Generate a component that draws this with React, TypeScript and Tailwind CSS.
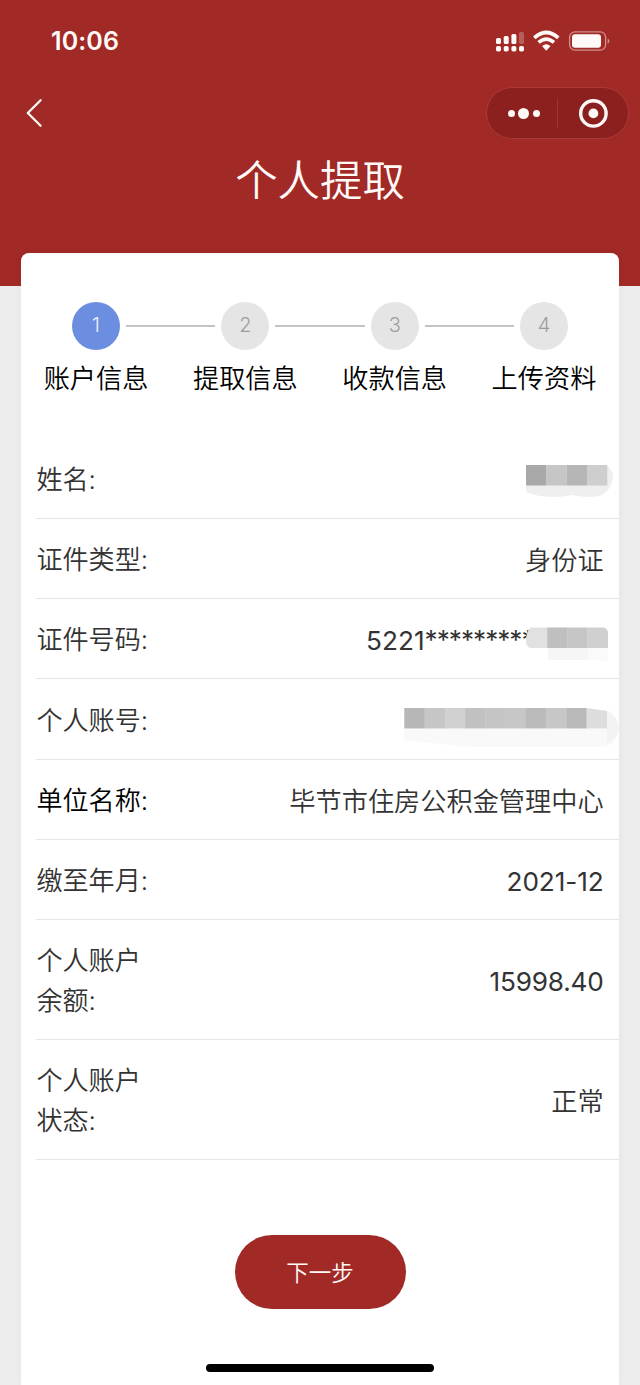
import type { ReactNode } from "react";

const steps = ["账户信息", "提取信息", "收款信息", "上传资料"];

function StatusBar() {
  return (
    <div className="flex h-[82px] items-center justify-between pl-[51px] pr-[30px]">
      <span className="text-[25px] font-semibold leading-none tracking-[0.1px]">10:06</span>
      <svg width="116" height="24" viewBox="0 0 116 24" fill="#fffaf7">
        <rect x="2" y="9" width="5" height="6" rx="1.5" />
        <rect x="9.7" y="7" width="5" height="8" rx="1.5" />
        <rect x="17.4" y="5" width="5" height="10" rx="1.5" />
        <rect x="25" y="3" width="5" height="12" rx="1.5" opacity=".25" />
        <rect x="2" y="17" width="5" height="5.4" rx="1.7" />
        <rect x="9.7" y="17" width="5" height="5.4" rx="1.7" />
        <rect x="17.4" y="17" width="5" height="5.4" rx="1.7" />
        <rect x="25" y="17" width="5" height="5.4" rx="1.7" />
        <g fill="none" stroke="#fffaf7" strokeWidth="3.7">
          <path d="M40.3 8.8Q52.3 -1.8 64.3 8.8" />
          <path d="M44.6 13.4Q52.3 6.8 60 13.4" />
        </g>
        <path d="M48.9 17.1Q52.3 14.4 55.7 17.1L52.3 20.8Z" stroke="#fffaf7" strokeWidth="1.2" strokeLinejoin="round" />
        <rect x="75.6" y="2.8" width="36" height="18.4" rx="5.4" fill="none" stroke="#fffaf7" strokeWidth="1.3" opacity=".5" />
        <rect x="78" y="5.2" width="29" height="13.6" rx="3" />
        <path d="M113.6 9.2Q117.4 12 113.6 14.8Z" opacity=".5" />
      </svg>
    </div>
  );
}

function NavBar() {
  return (
    <div className="flex h-[62px] items-center justify-between pl-[24px] pr-[11px]">
      <svg width="20" height="30" viewBox="0 0 20 30" fill="none" stroke="#fffaf7" strokeWidth="2.3" strokeLinecap="round" strokeLinejoin="round">
        <path d="M16.6 2.2L3.8 15L16.6 27.8" />
      </svg>
      <div className="flex h-[52px] w-[143px] items-center rounded-full border border-[#aa3a37] bg-[#8b201e]">
        <div className="flex w-[70px] items-center justify-center gap-[3.5px] pl-[3px]">
          <span className="size-[7px] rounded-full bg-[#fffaf7]" />
          <span className="size-[11px] rounded-full bg-[#fffaf7]" />
          <span className="size-[7px] rounded-full bg-[#fffaf7]" />
        </div>
        <span className="h-[31px] w-px bg-[#a03330]" />
        <div className="flex flex-1 items-center justify-center">
          <svg width="30" height="30" viewBox="0 0 30 30">
            <circle cx="15.4" cy="15.4" r="12.7" fill="none" stroke="#fffaf7" strokeWidth="3.4" />
            <circle cx="15.4" cy="15.4" r="4.9" fill="#fffaf7" />
          </svg>
        </div>
      </div>
    </div>
  );
}

function Steps() {
  return (
    <div className="pt-[48.5px]">
      <div className="flex items-center px-[50.5px]">
        {steps.map((name, i) => (
          <div key={name} className={i === 0 ? "flex items-center" : "flex flex-1 items-center"}>
            {i > 0 && <span className="ml-[6px] mr-[6px] mt-px h-[1.5px] flex-1 bg-[#c4c4c4]" />}
            <span
              className={
                i === 0
                  ? "flex size-[48px] items-center justify-center rounded-full bg-[#6b8ee0] pb-0.5 text-[20px] text-[#eef3ff]"
                  : "flex size-[48px] items-center justify-center rounded-full bg-[#e5e5e5] pb-0.5 text-[20px] text-[#9d9d9d]"
              }
            >
              {i + 1}
            </span>
          </div>
        ))}
      </div>
      <div className="mt-[9.5px] grid grid-cols-4 text-center text-[26.2px] leading-[40px] text-black">
        {steps.map((name) => (
          <span key={name}>{name}</span>
        ))}
      </div>
    </div>
  );
}

function Row({ label, children, tall, dark }: { label: ReactNode; children: ReactNode; tall?: boolean; dark?: boolean }) {
  return (
    <div className={`flex items-center justify-between border-b border-[#e6e6e6] pr-[15px] pt-[3px] ${tall ? "h-[119.8px]" : "h-[80.3px]"}`}>
      <span className={`leading-[40px] ${dark ? "text-black" : "text-[#333]"}`}>{label}</span>
      <span className="relative flex items-center pt-px text-[26.2px] text-[#333]">{children}</span>
    </div>
  );
}

function NameMask() {
  return (
    <svg className="-mr-[11px] -mt-[2px]" width="104" height="40" viewBox="0 0 104 40">
      <path d="M15 6H92Q102 8 102 18Q100 34 86 37.5Q70 38.5 62 36Q34 41 15 33Z" fill="#efefef" />
      <rect x="15" y="6" width="20.5" height="20.5" fill="#a9a9a9" />
      <rect x="35.3" y="6" width="20.2" height="20.5" fill="#c6c6c6" />
      <rect x="55.5" y="6" width="20.5" height="20.5" fill="#b6b6b6" />
      <rect x="76" y="6" width="20.3" height="20.5" fill="#cecece" />
    </svg>
  );
}

function IdMask() {
  return (
    <svg className="absolute -right-[5px] top-[7px]" width="83" height="36" viewBox="0 0 83 36">
      <path d="M22 20H82V34L62 33H22Z" fill="#fafafa" />
      <rect x="22" y="20" width="40" height="13" fill="#f6f6f6" />
      <path d="M5 0.5H22V21H4Q0 19 0 15V11Q1 3 5 0.5Z" fill="#e1e1e1" />
      <rect x="21.3" y="0.5" width="20.3" height="20.5" fill="#bfbfbf" />
      <rect x="41.3" y="0.5" width="20.3" height="20.5" fill="#c6c6c6" />
      <path d="M61.3 0.5H78Q82 2 82 6V21H61.3Z" fill="#d0d0d0" />
    </svg>
  );
}

const accountCells = ["#b7b7b7", "#c6c6c6", "#d1d1d1", "#c1c1c1", "#c5c5c5", "#c7c7c7", "#bbbbbb", "#c7c7c7", "#b9b9b9"];

function AccountMask() {
  return (
    <svg className="-mr-[18px] mt-[9px]" width="220" height="46" viewBox="0 0 220 46">
      <path d="M2 26H206V7Q216 12 217 25Q215 40 204 44H66L2 37Z" fill="#f9f9f9" />
      <path d="M205 8Q217 16 217 26Q215 37 205 40Z" fill="#f3f3f3" />
      {accountCells.map((color, i) => (
        <rect key={i} x={2.3 + i * 20.25} y="5" width="20.6" height="20.5" fill={color} />
      ))}
      <path d="M184.5 5L205 8V25.5H184.5Z" fill="#dddddd" />
    </svg>
  );
}

export default function App() {
  return (
    <div className="flex h-[1385px] w-[640px] flex-col overflow-hidden bg-[#ededed] font-['Inter','Noto_Sans_CJK_SC',sans-serif] font-[350]">
      <header className="h-[285.5px] shrink-0 bg-[#a12926] text-[#fffaf7]">
        <StatusBar />
        <NavBar />
        <h1 className="mt-[7px] text-center text-[42.4px] leading-[60px]">个人提取</h1>
      </header>
      <main className="relative mx-[21.4px] -mt-[32.5px] flex flex-1 flex-col rounded-t-[8px] bg-white shadow-[0_0_10px_rgba(0,0,0,0.04)]">
        <Steps />
        <section className="ml-[15px] mt-[39.5px] text-[26.1px]">
          <Row label="姓名:"><NameMask /></Row>
          <Row label="证件类型:">身份证</Row>
          <Row label="证件号码:">
            <span className="mr-[70px] flex whitespace-nowrap font-normal">
              5221<span className="-mt-px tracking-[-1px]">*********</span>
            </span>
            <IdMask />
          </Row>
          <Row label="个人账号:"><AccountMask /></Row>
          <Row label="单位名称:" dark>毕节市住房公积金管理中心</Row>
          <Row label="缴至年月:"><span className="font-normal tracking-[-0.1px]">2021-12</span></Row>
          <Row tall label={<>个人账户<br />余额:</>}><span className="font-normal tracking-[-0.2px]">15998.40</span></Row>
          <Row tall label={<>个人账户<br />状态:</>}>正常</Row>
        </section>
        <button className="mx-auto mt-[75px] h-[74px] w-[171px] rounded-full bg-[#a12926] pt-[2px] text-[22.5px] text-[#fffaf7]">下一步</button>
        <div className="mx-auto mb-[13px] mt-auto h-[8.5px] w-[228px] rounded-full bg-black" />
      </main>
    </div>
  );
}
